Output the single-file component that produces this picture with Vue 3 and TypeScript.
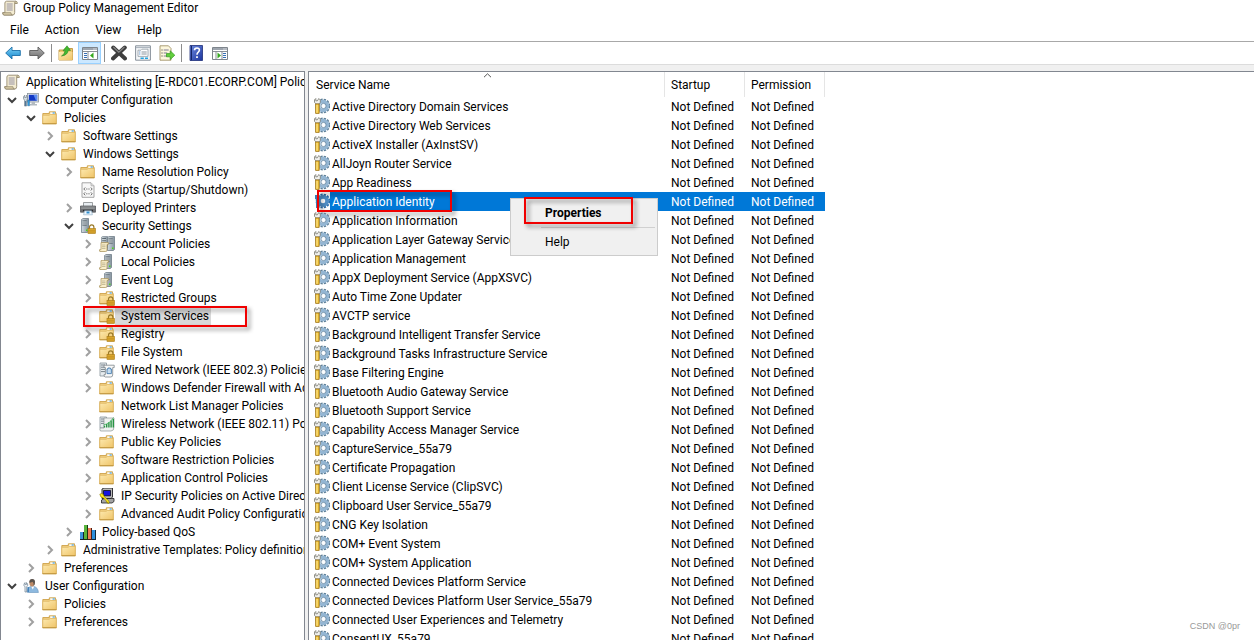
<script setup lang="ts">
interface TreeNode {
  label: string
  level: number
  icon: string
  state: 'open' | 'closed' | 'leaf'
  marked?: boolean
}

const menus: string[] = ['File', 'Action', 'View', 'Help']

const tree: TreeNode[] = [
  { label: 'Application Whitelisting [E-RDC01.ECORP.COM] Policy', level: 0, icon: 'scroll', state: 'leaf' },
  { label: 'Computer Configuration', level: 1, icon: 'computer', state: 'open' },
  { label: 'Policies', level: 2, icon: 'folder', state: 'open' },
  { label: 'Software Settings', level: 3, icon: 'folder', state: 'closed' },
  { label: 'Windows Settings', level: 3, icon: 'folder', state: 'open' },
  { label: 'Name Resolution Policy', level: 4, icon: 'folder', state: 'closed' },
  { label: 'Scripts (Startup/Shutdown)', level: 4, icon: 'script', state: 'leaf' },
  { label: 'Deployed Printers', level: 4, icon: 'printer', state: 'closed' },
  { label: 'Security Settings', level: 4, icon: 'server-lock', state: 'open' },
  { label: 'Account Policies', level: 5, icon: 'servers', state: 'closed' },
  { label: 'Local Policies', level: 5, icon: 'server-scroll', state: 'closed' },
  { label: 'Event Log', level: 5, icon: 'server-scroll', state: 'closed' },
  { label: 'Restricted Groups', level: 5, icon: 'folder-lock', state: 'closed' },
  { label: 'System Services', level: 5, icon: 'folder-lock', state: 'leaf', marked: true },
  { label: 'Registry', level: 5, icon: 'folder-lock', state: 'closed' },
  { label: 'File System', level: 5, icon: 'folder-lock', state: 'closed' },
  { label: 'Wired Network (IEEE 802.3) Policies', level: 5, icon: 'wired', state: 'closed' },
  { label: 'Windows Defender Firewall with Advanced Security', level: 5, icon: 'folder', state: 'closed' },
  { label: 'Network List Manager Policies', level: 5, icon: 'folder', state: 'leaf' },
  { label: 'Wireless Network (IEEE 802.11) Policies', level: 5, icon: 'wireless', state: 'closed' },
  { label: 'Public Key Policies', level: 5, icon: 'folder', state: 'closed' },
  { label: 'Software Restriction Policies', level: 5, icon: 'folder', state: 'closed' },
  { label: 'Application Control Policies', level: 5, icon: 'folder', state: 'closed' },
  { label: 'IP Security Policies on Active Directory', level: 5, icon: 'ipsec', state: 'closed' },
  { label: 'Advanced Audit Policy Configuration', level: 5, icon: 'folder', state: 'closed' },
  { label: 'Policy-based QoS', level: 4, icon: 'qos', state: 'closed' },
  { label: 'Administrative Templates: Policy definitions', level: 3, icon: 'folder', state: 'closed' },
  { label: 'Preferences', level: 2, icon: 'folder', state: 'closed' },
  { label: 'User Configuration', level: 1, icon: 'user', state: 'open' },
  { label: 'Policies', level: 2, icon: 'folder', state: 'closed' },
  { label: 'Preferences', level: 2, icon: 'folder', state: 'closed' },
]

const selected = 'Application Identity'

const services: string[] = [
  'Active Directory Domain Services',
  'Active Directory Web Services',
  'ActiveX Installer (AxInstSV)',
  'AllJoyn Router Service',
  'App Readiness',
  'Application Identity',
  'Application Information',
  'Application Layer Gateway Service',
  'Application Management',
  'AppX Deployment Service (AppXSVC)',
  'Auto Time Zone Updater',
  'AVCTP service',
  'Background Intelligent Transfer Service',
  'Background Tasks Infrastructure Service',
  'Base Filtering Engine',
  'Bluetooth Audio Gateway Service',
  'Bluetooth Support Service',
  'Capability Access Manager Service',
  'CaptureService_55a79',
  'Certificate Propagation',
  'Client License Service (ClipSVC)',
  'Clipboard User Service_55a79',
  'CNG Key Isolation',
  'COM+ Event System',
  'COM+ System Application',
  'Connected Devices Platform Service',
  'Connected Devices Platform User Service_55a79',
  'Connected User Experiences and Telemetry',
  'ConsentUX_55a79',
]
</script>

<template>
  <div class="window">
    <svg class="defs" aria-hidden="true">
      <defs>
        <linearGradient id="g-folder" x1="0" y1="0" x2="1" y2="1">
          <stop offset="0" stop-color="#fdeab0" /><stop offset="1" stop-color="#efc468" />
        </linearGradient>
        <linearGradient id="g-blue" x1="0" y1="0" x2="0" y2="1">
          <stop offset="0" stop-color="#7fd3f7" /><stop offset="1" stop-color="#1585cc" />
        </linearGradient>
        <linearGradient id="g-gray" x1="0" y1="0" x2="0" y2="1">
          <stop offset="0" stop-color="#b5b5b5" /><stop offset="1" stop-color="#6c6c6c" />
        </linearGradient>
        <linearGradient id="g-tower" x1="0" y1="0" x2="1" y2="0">
          <stop offset="0" stop-color="#d3dce2" /><stop offset="1" stop-color="#84929d" />
        </linearGradient>
        <linearGradient id="g-help" x1="0" y1="0" x2="1" y2="1">
          <stop offset="0" stop-color="#6d8ae0" /><stop offset="1" stop-color="#1b349c" />
        </linearGradient>
      </defs>

      <symbol id="i-lock" viewBox="0 0 16 16">
        <path d="M9.5 11V9.2a2.2 2.4 0 0 1 4.4 0V11" fill="none" stroke="#9a7b2c" stroke-width="1.2" />
        <rect x="8" y="10.5" width="7.5" height="5" fill="#dca92f" stroke="#a87913" stroke-width=".6" />
        <path d="M8.5 12.3h6.5M8.5 14h6.5" stroke="#b9861c" stroke-width=".6" />
      </symbol>
      <symbol id="i-scroll" viewBox="0 0 16 16">
        <path d="M4.5 1.2h9.3q1.7.2 1.5 2.2h-2.6v9.2q0 2.5-2.2 2.5H2.1Q.6 15 .7 12.7h2.2V3q0-1.5 1.6-1.8z" fill="#f4ecd2" stroke="#958a70" stroke-width=".9" />
        <path d="M.8 12.7h8.1q0 2.2 1.7 2.3H2.2Q.7 15 .8 12.7z" fill="#d9cda9" stroke="#8c8166" stroke-width=".7" />
        <path d="M13.8 1.2q-1.3.3-1.1 2.2h2.5" fill="#d8cca8" stroke="#8c8166" stroke-width=".7" />
        <path d="M4.7 4h6M4.7 6h6M4.7 8h6M4.7 10h6" stroke="#8d8aa0" stroke-width=".9" />
      </symbol>
      <symbol id="i-folder" viewBox="0 0 16 16">
        <path d="M.8 3.5h6.5V1.8h6.2v1.7h.7v10.2H.8z" fill="#f0cf80" stroke="#c99b3d" stroke-width=".8" />
        <path d="M8.2 2.4h4.8v1.6H8.2z" fill="#fff" /><path d="M10.6 2.4h2.2v1.2h-2.2z" fill="#3d9be0" />
        <path d="M.8 5.3h6.4l1-.9h6v9.3H.8z" fill="url(#g-folder)" stroke="#dcb460" stroke-width=".7" />
        <path d="M.5 13.7h14" stroke="#b88b34" stroke-width=".8" />
      </symbol>
      <symbol id="i-folder-lock" viewBox="0 0 16 16">
        <use href="#i-folder" /><use href="#i-lock" />
      </symbol>
      <symbol id="i-computer" viewBox="0 0 16 16">
        <rect x="4.5" y="1.5" width="11" height="8.5" fill="#e3e7ea" stroke="#8a949c" stroke-width=".8" />
        <rect x="5.8" y="2.8" width="8.4" height="6" fill="#1238c4" />
        <path d="M10.5 2.8h3.7v6H13z" fill="#5d8df0" />
        <path d="M8.5 10h3.5v2h2v1.5H7V12h1.5z" fill="#b2bac0" />
        <path d="M.5 4.8l1.2-1.6v2.3h1.6V3.2l1.2 1.6v2L3.6 8.2V14H1.5V8.2L.5 6.8z" fill="#d4dee5" stroke="#73818c" stroke-width=".7" />
        <path d="M4.7 8h1.9v5.8H4.7z" fill="#2e9be0" stroke="#356d94" stroke-width=".5" />
        <path d="M2 9h1.2v5H2z" fill="#527798" />
      </symbol>
      <symbol id="i-user" viewBox="0 0 16 16">
        <path d="M4.5 14.5q-.4-5.5 3.5-6h3Q15 9.4 15.4 14.5z" fill="#8db9df" stroke="#6793bc" stroke-width=".6" />
        <path d="M8.2 8.6l1.6 3 1.4-3z" fill="#fff" />
        <ellipse cx="9" cy="5" rx="2.6" ry="3.4" fill="#bd8b68" />
        <path d="M6.3 4.8Q6 .9 9.2 1q3.4.1 2.7 4.2-.4 2-1.3 2.6.3-3-1-4-1.8.8-3.3 1z" fill="#5a534d" />
        <path d="M1 6l1-1.4v1.8h1.5V4.6L4.6 6v1.8l-.9 1V14H2V8.8L1 7.8z" fill="#eef2f5" stroke="#6c7f91" stroke-width=".7" />
        <path d="M4.5 9h1.4v5H4.5z" fill="#3d7db8" />
      </symbol>
      <symbol id="i-script" viewBox="0 0 16 16">
        <path d="M2 .8h9l3 3v11.5H2z" fill="#f8f8f8" stroke="#9c9c9c" stroke-width=".9" />
        <path d="M11 .8v3h3" fill="#ddd" stroke="#a6a6a6" stroke-width=".7" />
        <path d="M5.2 5.5L3.8 7l1.4 1.5M10.8 5.5L12.2 7l-1.4 1.5M6.2 7h1.2M8.4 7h1.2M5.2 10.3l-1.4 1.5 1.4 1.5M10.8 10.3l1.4 1.5-1.4 1.5M6.2 11.8h1.2M8.4 11.8h1.2" fill="none" stroke="#5e5e5e" stroke-width=".9" />
      </symbol>
      <symbol id="i-printer" viewBox="0 0 16 16">
        <path d="M3.5 2.5h9v4h-9z" fill="#e9eef2" stroke="#85898c" stroke-width=".8" />
        <path d="M.5 6h15v6.2H.5z" fill="#6d6f73" stroke="#4b4d51" stroke-width=".7" />
        <path d="M1.2 7h13.6M1.2 8.3h13.6" stroke="#b6b8bb" stroke-width=".6" />
        <path d="M3 9.8h10v1.5H3z" fill="#28292c" />
        <path d="M4.5 10.8h7l.9 4H3.6z" fill="#edf5fb" stroke="#85a7c2" stroke-width=".6" />
        <path d="M6.5 11.5h3v2h-3z" fill="#2e8fd0" />
      </symbol>
      <symbol id="i-tower" viewBox="0 0 8 15">
        <path d="M.5 1.5L2 .5h5.5v13l-1.2 1H.5z" fill="url(#g-tower)" stroke="#66747f" stroke-width=".7" />
        <path d="M1.3 3h4.4M1.3 5h4.4M1.3 7h4.4" stroke="#38434c" stroke-width=".9" />
        <path d="M1.3 4h4.4M1.3 6h4.4" stroke="#f4f8fa" stroke-width=".6" />
        <path d="M5 11.5h1.5V13H5z" fill="#4bd71a" />
      </symbol>
      <symbol id="i-minidoc" viewBox="0 0 10 10">
        <path d="M2 .6h7.4v1.8H8v5.8q0 1.3-1.3 1.3H.8Q.3 9.4.5 7.7H2z" fill="#faefca" stroke="#a48d52" stroke-width=".7" />
        <path d="M3 3h3.5M3 4.7h3.5M3 6.4h3.5" stroke="#aaa17e" stroke-width=".7" />
      </symbol>
      <symbol id="i-server-lock" viewBox="0 0 16 16">
        <use href="#i-tower" x="1" y="0" width="8" height="15" /><use href="#i-lock" />
      </symbol>
      <symbol id="i-servers" viewBox="0 0 16 16">
        <use href="#i-tower" x="2" y="0" width="7" height="13" />
        <use href="#i-tower" x="8" y="0" width="8" height="15" />
        <use href="#i-minidoc" x="0" y="6" width="10" height="10" />
      </symbol>
      <symbol id="i-server-scroll" viewBox="0 0 16 16">
        <use href="#i-tower" x="5" y="0" width="8" height="15" />
        <use href="#i-minidoc" x="0" y="6" width="10" height="10" />
      </symbol>
      <symbol id="i-wired" viewBox="0 0 16 16">
        <path d="M1 1h6.5v13H1z" fill="#e7ecef" stroke="#87939b" stroke-width=".8" />
        <path d="M2 3h4M2 5.2h4M2 7.4h4M2 9.6h4" stroke="#5a6871" stroke-width=".8" />
        <path d="M5 3.2h10.2v2.4h-1.5V13q0 2-2 2H6.2q-1.4-.2-1.2-2.4h1.4V5.6H5z" fill="#f6f7f7" stroke="#7e868c" stroke-width=".8" />
        <path d="M8 7h1V6h2.4v1h1v4.6H8z" fill="#c4dcf0" stroke="#4a7eae" stroke-width=".9" />
      </symbol>
      <symbol id="i-wireless" viewBox="0 0 16 16">
        <path d="M1 1h6.5v11H1z" fill="#e7ecef" stroke="#87939b" stroke-width=".8" />
        <path d="M2 3h4M2 5.2h4M2 7.4h4" stroke="#5a6871" stroke-width=".8" />
        <path d="M5 2h10v9q0 4-3 4H1.5Q.5 14 1 12h4z" fill="#eef1f0" stroke="#8d9695" stroke-width=".7" />
        <path d="M5.5 11.5V9.8M7.7 11.5V8M9.9 11.5V6.2M12.1 11.5V4.6M14.3 11.5V3" stroke="#279443" stroke-width="1.4" />
        <path d="M4.5 9Q11 7.5 14.5 1.5" fill="none" stroke="#3aae57" stroke-width=".8" />
      </symbol>
      <symbol id="i-ipsec" viewBox="0 0 16 16">
        <path d="M3 1l2-1h8.5v9L12 10.5H3z" fill="#b9b9b9" stroke="#222" stroke-width=".9" />
        <path d="M4.5 2.5h7v5.3h-7z" fill="#1414e0" stroke="#000" stroke-width=".7" />
        <path d="M2.5 12L5 10.5h10v3L13 15H2.5z" fill="#a4a4a4" stroke="#222" stroke-width=".8" />
        <path d="M.8 6.2Q2.5 4.8 4.4 6.5L5 8.3l5 4.9v2.1H8.6v-1.1H7.4V13L4.3 9.8Q1.4 10 .8 6.2z" fill="#ffec16" stroke="#867400" stroke-width=".6" />
      </symbol>
      <symbol id="i-qos" viewBox="0 0 16 16">
        <path d="M0 8h3v7H0z" fill="#3c94dc" /><path d="M3 8h1v8H0v-1h3z" fill="#12222e" />
        <path d="M4 1h3v14H4z" fill="#57b43c" /><path d="M7 1h1v15H4v-1h3z" fill="#173311" />
        <path d="M8 4h3v11H8z" fill="#ec7c54" /><path d="M11 4h1v12H8v-1h3z" fill="#45201a" />
        <path d="M12 6h3v9h-3z" fill="#2d8fdb" /><path d="M15 6h1v10h-4v-1h3z" fill="#12283b" />
      </symbol>
      <symbol id="i-gear" viewBox="0 0 16 16">
        <circle cx="9" cy="8" r="6.4" fill="none" stroke="#5f8099" stroke-width="2" stroke-dasharray="2.2 1.15" />
        <circle cx="9" cy="8" r="4.5" fill="#f2f7fa" stroke="#94b6d3" stroke-width="3.4" />
        <circle cx="9.5" cy="8" r="2.6" fill="#fcfdfe" stroke="#5f819d" stroke-width=".8" />
        <path d="M.5 1.8L1.8.5v2.3h1.6L4.8.5 6.3 2v2.4L5 6H2L.5 4.3z" fill="#f2f2ef" stroke="#77776f" stroke-width=".8" />
        <path d="M1.6 6h3.6v9.4H1.6z" fill="#f3c235" stroke="#9b7012" stroke-width=".8" />
        <path d="M3 6.8v8" stroke="#fff0a7" stroke-width=".9" />
      </symbol>
      <symbol id="i-gear-selected" viewBox="0 0 16 16">
        <circle cx="9" cy="8" r="6.4" fill="none" stroke="#2d6eaa" stroke-width="2" stroke-dasharray="2.2 1.15" />
        <circle cx="9" cy="8" r="4.2" fill="#fff" stroke="#4f8dc4" stroke-width="3.8" />
        <path d="M1 2h4.5v13H2V6H1z" fill="#397fb6" />
      </symbol>

      <symbol id="i-back" viewBox="0 0 16 16">
        <path d="M.7 8L7 2v3.5h8.3v5H7V14z" fill="url(#g-blue)" stroke="#1d6fa8" stroke-width=".9" />
      </symbol>
      <symbol id="i-forward" viewBox="0 0 16 16">
        <path d="M15.3 8L9 2v3.5H.7v5H9V14z" fill="url(#g-gray)" stroke="#5c5c5c" stroke-width=".9" />
      </symbol>
      <symbol id="i-up" viewBox="0 0 16 16">
        <path d="M1 5h5l1-1.5h7.5V15H1z" fill="#efc970" stroke="#bd933e" stroke-width=".9" />
        <path d="M1 7h13.5v8H1z" fill="url(#g-folder)" />
        <path d="M3.5 11q3-1.4 3.6-5.2H5L9 .8l3.5 4.6h-2.3Q9.6 10.2 3.5 11z" fill="#43b931" stroke="#2c8622" stroke-width=".6" />
      </symbol>
      <symbol id="i-pane-left" viewBox="0 0 16 16">
        <path d="M.5 2.5h15v12H.5z" fill="#fff" stroke="#7e858c" />
        <path d="M1 3h14v2H1z" fill="#9ea5ae" /><path d="M11.5 4h1M13.5 4h1" stroke="#fff" />
        <path d="M1 6.5h14M6 6.5V14" stroke="#7e858c" stroke-width=".9" />
        <path d="M2 8.5h3M2 10.5h3M2 12.5h3" stroke="#366fb5" />
        <path d="M11.5 7.5v6L8 10.5z" fill="#34a91f" />
      </symbol>
      <symbol id="i-pane-right" viewBox="0 0 16 16">
        <path d="M.5 2.5h15v12H.5z" fill="#fff" stroke="#7e858c" />
        <path d="M1 3h14v2H1z" fill="#9ea5ae" /><path d="M11.5 4h1M13.5 4h1" stroke="#fff" />
        <path d="M1 6.5h14M4 6.5V14M10 6.5V14" stroke="#7e858c" stroke-width=".9" />
        <path d="M11 8.5h3M11 10.5h3M11 12.5h3" stroke="#366fb5" />
        <path d="M5.5 7.5v6L9 10.5z" fill="#34a91f" />
      </symbol>
      <symbol id="i-delete" viewBox="0 0 16 16">
        <path d="M2.2 2.5l11.8 11M13.8 2.5L2 13.5" stroke="#3e3e3e" stroke-width="4" stroke-linecap="round" />
        <path d="M2.3 2l5.5 5.2L13.5 2" stroke="#858585" stroke-width="1.2" fill="none" />
      </symbol>
      <symbol id="i-props" viewBox="0 0 16 16">
        <path d="M.6.8h14.8v14.4H.6z" fill="#f4f6f8" stroke="#87909a" />
        <path d="M1 2.5h14" stroke="#aeb7c0" stroke-width="1.2" />
        <path d="M3 5.2h3l1-1h6v7.2H3z" fill="#fff" stroke="#919aa3" stroke-width=".8" />
        <path d="M4.3 7h1M4.3 9h1" stroke="#3677bd" /><path d="M6.5 7h5.2M6.5 9h5.2" stroke="#8b959e" />
        <path d="M5.5 13.3h3.3M10 13.3h3" stroke="#24a4df" stroke-width="1.4" />
      </symbol>
      <symbol id="i-export" viewBox="0 0 16 16">
        <path d="M1 .8h8.5L12 3.5v11.7H1z" fill="#fdf7dd" stroke="#a39469" stroke-width=".9" />
        <path d="M2.5 5h1M2.5 8h1M2.5 11h1" stroke="#333" /><path d="M4.7 5h5M4.7 8h3.5M4.7 11h3.5" stroke="#7e7b96" />
        <path d="M7.5 8.6h3.7V5.8l4.6 4.4-4.6 4.4v-2.8H7.5z" fill="#62cf3d" stroke="#2e971c" stroke-width=".7" />
      </symbol>
      <symbol id="i-help" viewBox="0 0 16 16">
        <path d="M2 .5h12.5v15H2z" fill="url(#g-help)" stroke="#1e2f78" stroke-width=".8" />
        <path d="M3.5.8v14.4" stroke="#142566" stroke-width="1" />
        <path d="M6.5 5.3q0-2.3 2.5-2.3t2.4 2.1q0 1.3-1.3 2.2Q9 8.1 9 9.8" fill="none" stroke="#fff" stroke-width="1.6" />
        <path d="M8.1 11.3h1.8V13H8.1z" fill="#fff" />
      </symbol>
    </svg>

    <header class="titlebar">
      <svg class="icon"><use href="#i-scroll" /></svg>
      <span>Group Policy Management Editor</span>
    </header>

    <nav class="menubar">
      <button v-for="m in menus" :key="m" type="button">{{ m }}</button>
    </nav>

    <div class="toolbar">
      <button type="button" aria-label="Back"><svg class="icon"><use href="#i-back" /></svg></button>
      <button type="button" aria-label="Forward"><svg class="icon"><use href="#i-forward" /></svg></button>
      <i class="divider"></i>
      <button type="button" aria-label="Up one level"><svg class="icon"><use href="#i-up" /></svg></button>
      <button type="button" class="pressed" aria-label="Show or hide console tree"><svg class="icon"><use href="#i-pane-left" /></svg></button>
      <i class="divider"></i>
      <button type="button" aria-label="Delete"><svg class="icon"><use href="#i-delete" /></svg></button>
      <button type="button" aria-label="Properties"><svg class="icon"><use href="#i-props" /></svg></button>
      <button type="button" aria-label="Export list"><svg class="icon"><use href="#i-export" /></svg></button>
      <i class="divider"></i>
      <button type="button" aria-label="Help"><svg class="icon"><use href="#i-help" /></svg></button>
      <button type="button" aria-label="Show or hide action pane"><svg class="icon"><use href="#i-pane-right" /></svg></button>
    </div>

    <main class="panes">
      <ul class="tree">
        <li v-for="(n, i) in tree" :key="i" :class="['node', `level-${n.level}`, { marked: n.marked }]">
          <span v-if="n.level" class="chevron" :class="n.state">
            <svg v-if="n.state === 'open'" viewBox="0 0 12 12"><path d="M2 4l4 4 4-4" /></svg>
            <svg v-else-if="n.state === 'closed'" viewBox="0 0 12 12"><path d="M4 2l4 4-4 4" /></svg>
          </span>
          <svg class="icon"><use :href="`#i-${n.icon}`" /></svg>
          <span class="label">{{ n.label }}</span>
          <span v-if="n.marked" class="callout tree-callout"></span>
        </li>
      </ul>

      <section class="list">
        <table>
          <colgroup><col class="c-name" /><col class="c-state" /><col class="c-state" /></colgroup>
          <thead>
            <tr>
              <th scope="col">
                Service Name
                <svg class="sort" viewBox="0 0 9 5"><path d="M1 4.2L4.5 .8 8 4.2" /></svg>
              </th>
              <th scope="col">Startup</th>
              <th scope="col">Permission</th>
            </tr>
          </thead>
          <tbody>
            <tr v-for="s in services" :key="s" :class="{ selected: s === selected }">
              <td>
                <div class="service">
                  <svg class="icon"><use :href="s === selected ? '#i-gear-selected' : '#i-gear'" /></svg>
                  <span class="name">{{ s }}</span>
                  <template v-if="s === selected">
                    <span class="callout row-callout"></span>
                    <div class="context">
                      <button type="button" class="default">Properties</button>
                      <hr />
                      <button type="button">Help</button>
                      <span class="callout menu-callout"></span>
                    </div>
                  </template>
                </div>
              </td>
              <td>Not Defined</td>
              <td>Not Defined</td>
            </tr>
          </tbody>
        </table>
      </section>
    </main>
    <span class="watermark">CSDN @0pr</span>
  </div>
</template>

<style>
body {
  margin: 0;
  background: #fff;
}
</style>

<style scoped>
.window {
  position: relative;
  display: flex;
  flex-direction: column;
  height: 100vh;
  overflow: hidden;
  background: #fff;
  color: #000;
  font: 12px/18px Roboto, "Open Sans", sans-serif;
  white-space: nowrap;
}
.defs {
  position: absolute;
  width: 0;
  height: 0;
}
.icon {
  display: block;
  flex: none;
  width: 16px;
  height: 16px;
}
button {
  margin: 0;
  padding: 0;
  border: 0;
  background: none;
  color: inherit;
  font: inherit;
}
.titlebar {
  display: flex;
  align-items: center;
  gap: 5px;
  height: 16px;
  padding-left: 2px;
}
.menubar {
  display: flex;
  gap: 16px;
  height: 26px;
  padding: 2px 10px 0;
  box-sizing: border-box;
  border-bottom: 1px solid #a8a8a8;
}
.menubar,
.toolbar,
.titlebar {
  flex: none;
}
.toolbar {
  display: flex;
  align-items: center;
  gap: 1px;
  height: 22px;
  padding-left: 1px;
  border-bottom: 1px solid #dcdcdc;
}
.toolbar button {
  display: grid;
  place-items: center;
  box-sizing: border-box;
  width: 23px;
  height: 22px;
  border: 1px solid transparent;
}
.toolbar .pressed {
  border-color: #99d1ff;
  background: #cce8ff;
}
.divider {
  width: 1px;
  height: 18px;
  margin: 0 1px 0 2px;
  background: #8c8c8c;
}
.panes {
  display: flex;
  flex: 1;
  min-height: 0;
  gap: 3px;
  padding-top: 6px;
  background: #f0f0f0;
}
.tree {
  flex: none;
  box-sizing: border-box;
  width: 305px;
  margin: 0;
  padding: 1px 0 0;
  overflow: hidden;
  list-style: none;
  border: 1px solid #828790;
  border-bottom: 0;
  background: #fff;
}
.node {
  position: relative;
  display: flex;
  align-items: center;
  height: 18px;
}
.level-0 { padding-left: 3px; }
.level-1 { padding-left: 5px; }
.level-2 { padding-left: 24px; }
.level-3 { padding-left: 43px; }
.level-4 { padding-left: 62px; }
.level-5 { padding-left: 81px; }
.chevron {
  flex: none;
  width: 12px;
  height: 12px;
  margin-right: 5px;
}
.chevron svg {
  display: block;
  fill: none;
  stroke: #a0a0a0;
  stroke-width: 2;
}
.chevron.open svg {
  stroke: #404040;
}
.label {
  padding: 0 2px 0 6px;
}
.marked .label {
  background: #d9d9d9;
}
.callout {
  position: absolute;
  box-sizing: border-box;
  border: 2px solid #f00000;
  filter: drop-shadow(3px 3px 2px rgba(0, 0, 0, 0.45));
  pointer-events: none;
}
.tree-callout {
  top: -1px;
  left: 82px;
  width: 164px;
  height: 21px;
}
.list {
  flex: 1;
  min-width: 0;
  overflow: hidden;
  border-top: 1px solid #828790;
  border-left: 1px solid #828790;
  background: #fff;
}
table {
  width: 516px;
  table-layout: fixed;
  border-collapse: separate;
  border-spacing: 0;
}
.c-name { width: 356px; }
.c-state { width: 80px; }
th {
  position: relative;
  height: 25px;
  padding: 0 0 0 7px;
  box-sizing: border-box;
  border-right: 1px solid #e5e5e5;
  text-align: left;
  font-weight: 400;
}
td {
  height: 19px;
  padding: 0 0 0 7px;
}
th:nth-child(n + 2),
td:nth-child(n + 2) {
  padding-left: 6px;
}
.sort {
  position: absolute;
  top: 1px;
  left: 174px;
  width: 9px;
  height: 5px;
  fill: none;
  stroke: #555;
}
td:first-child {
  padding-left: 5px;
}
.service {
  position: relative;
  display: flex;
  align-items: flex-start;
  height: 19px;
}
.service .icon {
  margin-top: 1px;
}
.name {
  flex: 1;
  height: 19px;
  padding-left: 2px;
  line-height: 20px;
}
.selected td:nth-child(n + 2),
.selected .name {
  background: #0078d7;
  color: #fff;
}
.row-callout {
  top: -2px;
  left: 3px;
  width: 135px;
  height: 22px;
}
.context {
  position: absolute;
  z-index: 1;
  top: 6px;
  left: 196px;
  box-sizing: border-box;
  width: 148px;
  height: 58px;
  padding: 3px 2px;
  border: 1px solid #ccc;
  background: #f0f0f0;
  color: #000;
}
.context button {
  display: block;
  width: 100%;
  height: 22px;
  padding-left: 32px;
  text-align: left;
}
.context .default {
  font-weight: 700;
}
.context hr {
  height: 1px;
  margin: 3px 0 3px 28px;
  border: 0;
  background: #d0d0d0;
}
.menu-callout {
  top: -2px;
  left: 13px;
  width: 109px;
  height: 27px;
}
.watermark {
  position: absolute;
  right: 14px;
  bottom: 5px;
  color: #999;
  font: 9px/18px "Liberation Sans", sans-serif;
}
</style>
